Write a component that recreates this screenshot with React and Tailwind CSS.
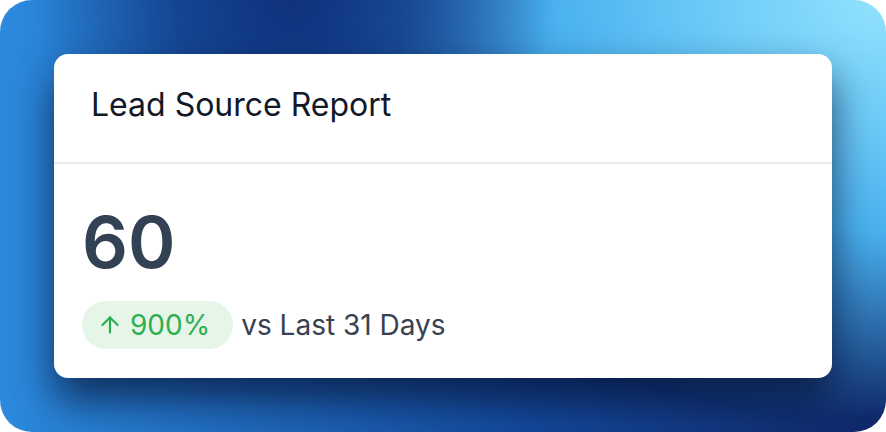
import React from "react";
import { ArrowUp } from "lucide-react";

export default function App() {
  return (
    <div className="w-[886px] h-[432px] bg-white font-['Inter','Noto_Sans',sans-serif]">
      <div className="w-full h-full rounded-[32px] overflow-hidden p-[54px] bg-[radial-gradient(ellipse_260px_230px_at_33%_0%,#0f327c_0%,rgba(15,50,124,0.7)_45%,rgba(15,50,124,0)_100%),radial-gradient(ellipse_600px_420px_at_100%_0%,#93e2fd_0%,#6ccaf8_30%,#4ab2ef_55%,rgba(60,160,230,0)_100%),linear-gradient(to_right,#2c8ade_0%,#1f68bb_30%,#14489a_60%,#0f2868_100%)]">
        <div className="h-full bg-white rounded-[14px] shadow-[0_22px_40px_rgba(4,14,45,0.7)] flex flex-col">
          <div className="h-[110px] flex items-center pl-[37px] pb-[6px] border-b-2 border-[#eaeaf0]">
            <h2 className="text-[32px] leading-none text-[#111827] font-normal">Lead Source Report</h2>
          </div>
          <div className="flex flex-col px-[28px] pt-[42px]">
            <div className="text-[72px] leading-none font-semibold text-[#334155]">60</div>
            <div className="flex items-center mt-[23px]">
              <div className="h-[48px] flex items-center rounded-full bg-[#e5f6e9] pl-[15px] pr-[23px] gap-[7px] text-[#2fae4f]">
                <ArrowUp size={26} strokeWidth={2} />
                <span className="text-[28px] leading-none">900%</span>
              </div>
              <span className="ml-[8px] text-[28px] leading-none text-[#374151]">vs Last 31 Days</span>
            </div>
          </div>
        </div>
      </div>
    </div>
  );
}
